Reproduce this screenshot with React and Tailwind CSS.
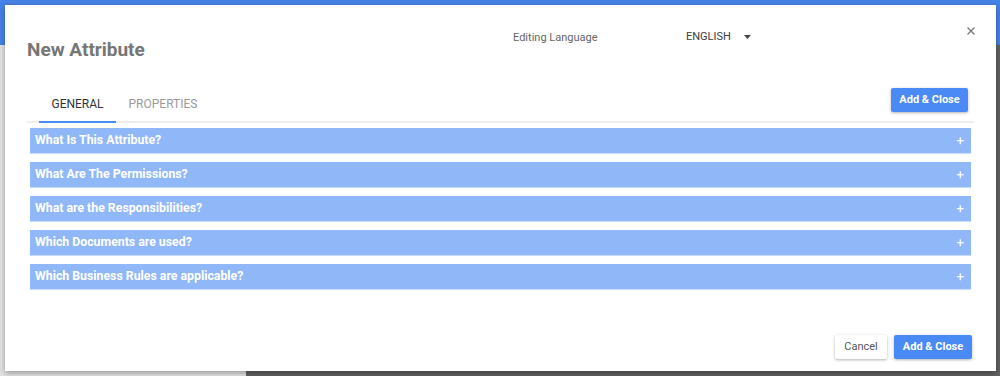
import React from "react";

const items = [
  "What Is This Attribute?",
  "What Are The Permissions?",
  "What are the Responsibilities?",
  "Which Documents are used?",
  "Which Business Rules are applicable?",
];

export default function App() {
  return (
    <div
      className="relative w-[1000px] h-[376px] overflow-hidden"
      style={{ fontFamily: "Roboto, 'Liberation Sans', sans-serif" }}
    >
      {/* page behind */}
      <div className="flex flex-col h-full">
        <div className="h-[45px] bg-[#4683e6]" />
        <div className="flex flex-1">
          <div className="w-[246px] bg-[#e3e3e3]" />
          <div className="flex-1 bg-[#616161]" />
        </div>
      </div>

      {/* modal */}
      <div className="absolute left-[5px] top-[5px] w-[991px] h-[366px] bg-white shadow-[0_2px_6px_rgba(0,0,0,0.35)] flex flex-col">
        {/* header */}
        <div className="flex h-[78px] shrink-0 pl-[22px]">
          <div className="w-[486px] shrink-0 mt-[33px] text-[19px] leading-[24px] font-bold text-[#767676]">
            New Attribute
          </div>
          <div className="w-[173px] shrink-0 mt-[26px] text-[11px] leading-[14px] text-[#666666]">
            Editing Language
          </div>
          <div className="flex items-start mt-[25px] text-[11px] leading-[14px] text-[#3c3c3c]">
            <span>ENGLISH</span>
            <svg className="ml-[13px] mt-[5px]" width="7" height="4" viewBox="0 0 7 4">
              <path d="M0 0 L7 0 L3.5 4 Z" fill="#444444" />
            </svg>
          </div>
          <div className="ml-auto mr-[21px] mt-[22px]">
            <svg width="8" height="8" viewBox="0 0 8 8">
              <path d="M0.5 0.5 L7.5 7.5 M7.5 0.5 L0.5 7.5" stroke="#7a7a7a" strokeWidth="1.4" />
            </svg>
          </div>
        </div>

        {/* tabs row */}
        <div className="flex items-start h-[40px] mx-[22px] border-b-2 border-[#eeeeee] shrink-0">
          <div className="ml-[12px] w-[77px] h-[40px] pt-[14px] text-center text-[12px] leading-[14px] text-[#333333] border-b-2 border-[#4a8af4]">
            GENERAL
          </div>
          <div className="w-[94px] h-[40px] pt-[14px] text-center text-[12px] leading-[14px] text-[#9a9a9a]">
            PROPERTIES
          </div>
          <button className="ml-auto mr-[6px] mt-[5px] h-[24px] w-[77px] rounded-[2px] bg-[#4a8af4] text-white text-[11px] font-bold shadow-[0_1px_3px_rgba(0,0,0,0.3)]">
            Add &amp; Close
          </button>
        </div>

        {/* accordion */}
        <div className="flex flex-col gap-[8px] mx-[25px] mt-[5px]">
          {items.map((t) => (
            <div
              key={t}
              className="flex items-center justify-between h-[26px] pl-[5px] pr-[7px] bg-[#90b7f8] border-b border-[#c9dbfb] text-white text-[12.3px] font-bold"
            >
              <span>{t}</span>
              <span className="text-[13px] font-normal leading-none">+</span>
            </div>
          ))}
        </div>

        <div className="flex-1" />

        {/* footer */}
        <div className="flex justify-end gap-[7px] pr-[24px] pb-[12px]">
          <button className="h-[24px] w-[52px] rounded-[2px] bg-white text-[#555555] text-[11px] shadow-[0_1px_3px_rgba(0,0,0,0.3)]">
            Cancel
          </button>
          <button className="h-[24px] w-[78px] rounded-[2px] bg-[#4a8af4] text-white text-[11px] font-bold shadow-[0_1px_3px_rgba(0,0,0,0.3)]">
            Add &amp; Close
          </button>
        </div>
      </div>
    </div>
  );
}
